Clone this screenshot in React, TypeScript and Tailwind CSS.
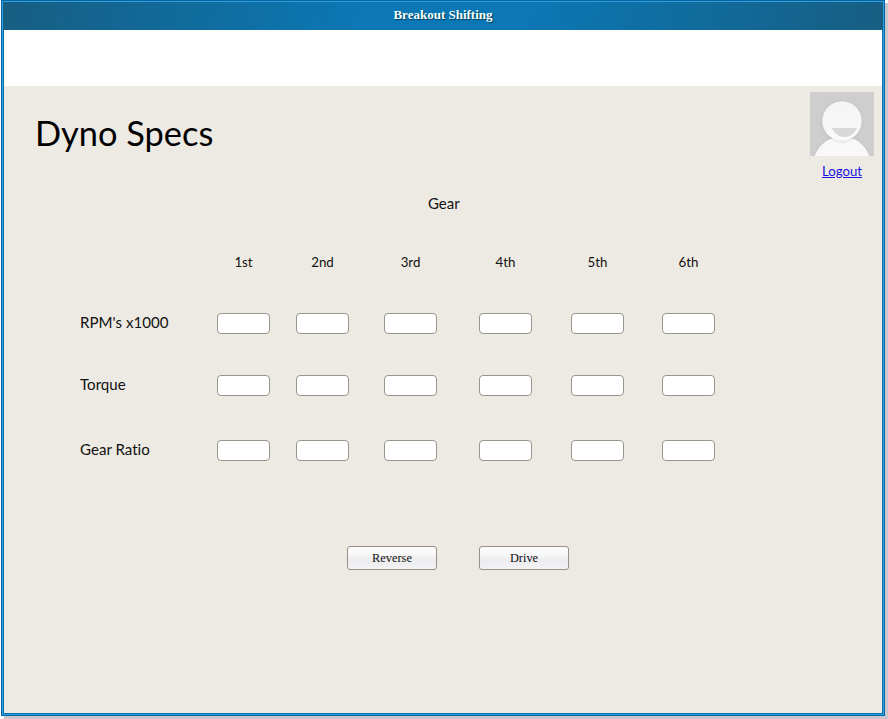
const gears = ["1st", "2nd", "3rd", "4th", "5th", "6th"];
const columns = "grid grid-cols-[137px_79px_88px_95px_92px_91px_53px]";

function SpecRow({ label, className }: { label: string; className: string }) {
  return (
    <div className={`${columns} h-[21px] ${className}`}>
      <span className="whitespace-nowrap text-[15.1px] leading-[19px]">{label}</span>
      {gears.map((gear) => (
        <input
          key={gear}
          aria-label={`${label} ${gear}`}
          className="block h-[21px] w-[53px] rounded-[4px] border border-[#98958b] bg-white px-1 text-xs outline-none"
        />
      ))}
    </div>
  );
}

function ActionButton({ children }: { children: string }) {
  return (
    <button className="h-6 w-[90px] rounded-[3px] border border-[#98918a] bg-linear-to-b from-[#fbfbfc] from-25% via-[#ececee] via-60% to-[#f3f3f5] font-['Liberation_Serif',serif] text-[12.4px] leading-[22px] text-[#111]">
      {children}
    </button>
  );
}

function Avatar() {
  return (
    <svg width="64" height="64" viewBox="0 0 64 64" className="block">
      <defs>
        <linearGradient id="face" x1="0" y1="0" x2="0" y2="1">
          <stop offset="0" stopColor="#f4f4f4" />
          <stop offset="1" stopColor="#fafafa" />
        </linearGradient>
        <filter id="soft" x="-20%" y="-20%" width="140%" height="140%">
          <feDropShadow dx="0" dy="0.5" stdDeviation="1.8" floodColor="#888" floodOpacity="0.35" />
        </filter>
      </defs>
      <rect width="64" height="64" fill="#cecece" />
      <path d="M4.500 64C9 53 17 45 32 45s23 8 27.500 19z" fill="#f8f8f8" filter="url(#soft)" />
      <circle cx="32" cy="29" r="19.700" fill="url(#face)" filter="url(#soft)" />
      <path d="M21.500 36h25.500C44 42 40 45 34.500 45S25 42 21.500 36z" fill="#d8d8d8" />
    </svg>
  );
}

export default function App() {
  return (
    <div className="h-[719px] w-[888px] overflow-hidden bg-white pl-px font-['Lato',sans-serif] text-[#111] [font-variant-ligatures:none]">
      <div className="h-[716px] w-[884px] border border-[#0762a0] bg-[#2fa0de] p-px shadow-[3px_3px_0_#c7c7cd]">
        <div className="flex h-[712px] flex-col border border-t-0 border-[#0871b0] bg-[#edeae3]">
          <header className="-mx-px flex h-7 shrink-0 items-center justify-center bg-[linear-gradient(100deg,#175e82_0%,#0b77b4_40%,#0b77b4_60%,#175e82_100%)] pb-[2px] font-['Liberation_Serif',serif] text-[13px] font-bold text-[#f4ffff] [text-shadow:1px_1px_1px_#063b59]">
            Breakout Shifting
          </header>
          <div className="h-14 shrink-0 bg-white" />
          <main className="flex-1">
            <div className="flex h-[96px] justify-between pl-[31px] pr-2 pt-1.5">
              <h1 className="mt-[18px] text-[34.4px] leading-[46px] text-black">Dyno Specs</h1>
              <div className="flex w-16 flex-col items-center">
                <Avatar />
                <a href="#" className="mt-[6px] text-[13.2px] leading-[18px] text-[#1b12e0] underline">Logout</a>
              </div>
            </div>
            <div className="pl-[76px]">
              <h2 className="ml-[348px] mt-[11px] text-[15px] leading-5">Gear</h2>
              <div className={`${columns} mt-[39px] h-5 text-[13.3px] leading-5`}>
                <span />
                {gears.map((gear) => (
                  <span key={gear} className="w-[53px] text-center">{gear}</span>
                ))}
              </div>
              <SpecRow label="RPM's x1000" className="mt-[41px]" />
              <SpecRow label="Torque" className="mt-[41px]" />
              <SpecRow label="Gear Ratio" className="mt-11" />
              <div className="ml-[267px] mt-[85px] flex gap-[42px]">
                <ActionButton>Reverse</ActionButton>
                <ActionButton>Drive</ActionButton>
              </div>
            </div>
          </main>
        </div>
      </div>
    </div>
  );
}
